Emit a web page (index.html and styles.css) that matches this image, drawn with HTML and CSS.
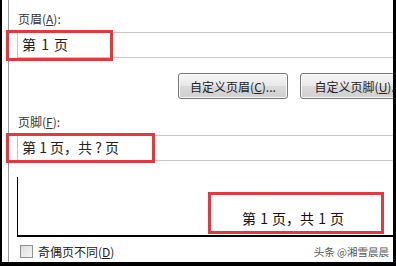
FILE: index.html
```html
<!DOCTYPE html>
<html lang="zh-CN">
<head>
  <meta charset="UTF-8">
  <title>页面设置 - 页眉/页脚</title>
  <link rel="stylesheet" href="styles.css">
</head>
<body>
  <div class="frame">
    <div class="dialog">
      <div class="label">页眉(<u>A</u>):</div>
      <div class="textbox">第 1 页</div>

      <div class="buttons">
        <button class="btn">自定义页眉(<u>C</u>)...</button>
        <button class="btn">自定义页脚(<u>U</u>)...</button>
      </div>

      <div class="label label-footer">页脚(<u>F</u>):</div>
      <div class="textbox textbox-footer">第 1 页，共 ? 页</div>

      <div class="preview">
        <span class="preview-text">第 1 页，共 1 页</span>
      </div>

      <div class="options">
        <label class="check"><span class="box"></span><span>奇偶页不同(<u>D</u>)</span></label>
        <span class="mark">头条 @湘雪晨晨</span>
      </div>
    </div>

    <!-- red marks drawn over the dialog -->
    <div class="mark-box mark-header"></div>
    <div class="mark-box mark-footer"></div>
    <div class="mark-box mark-preview"></div>
  </div>
</body>
</html>
```

FILE: styles.css
```css
body {
  margin: 0;
  font-family: "Noto Sans CJK SC", "Noto Sans", sans-serif;
  background: #000;
}
.frame {
  position: relative;
  width: 396px;
  height: 266px;
  box-sizing: border-box;
  border-left: 2px solid #000;
  border-right: 3px solid #000;
  border-bottom: 4px solid #000;
  background: #fff;
  overflow: hidden;
}
.dialog {
  margin-left: 6px;
  height: 100%;
  box-sizing: border-box;
  border-left: 1px solid #9a9a9a;
  padding: 11px 0 0 8px;
}
u { text-decoration: underline; text-underline-offset: 1px; }

.label {
  font-size: 12px;
  line-height: 16px;
  color: #333;
  padding-left: 1px;
}
.label-footer { margin-top: 15px; }

.textbox {
  margin-top: 5px;
  height: 26px;
  box-sizing: border-box;
  border: 1px solid #c6c6c6;
  border-right: none;
  padding-left: 4px;
  font-size: 14px;
  line-height: 23px;
  word-spacing: 2px;
  color: #222;
  white-space: pre;
}
.textbox-footer { word-spacing: 0; }

.buttons {
  display: flex;
  gap: 12px;
  margin: 15px 0 0 161px;
  white-space: nowrap;
}
.btn {
  flex: none;
  width: 110px;
  height: 26px;
  padding: 0;
  font-family: inherit;
  font-size: 12px;
  color: #222;
  border: 1px solid #777;
  border-radius: 3px;
  background: linear-gradient(to bottom, #f6f6f6, #e8e8e8 50%, #dadada 51%, #cfcfcf);
  box-shadow: inset 0 0 0 1px #fbfbfb;
}
.btn + .btn { width: 116px; }

.preview {
  display: flex;
  align-items: flex-end;
  margin-top: 16px;
  height: 60px;
  box-sizing: border-box;
  border-left: 1px solid #000;
  border-bottom: 2px solid #000;
  padding: 0 0 9px 224px;
}
.preview-text {
  font-size: 14px;
  line-height: 16px;
  word-spacing: 1px;
  color: #111;
  white-space: nowrap;
}

.options {
  display: flex;
  align-items: center;
  justify-content: space-between;
  margin-top: 6px;
  padding-right: 4px;
}
.check {
  display: flex;
  align-items: center;
  gap: 5px;
  font-size: 12px;
  color: #222;
  padding-left: 3px;
}
.box {
  width: 11px;
  height: 11px;
  border: 1px solid #8e8f8f;
  background: linear-gradient(135deg, #dcdcdc, #f6f6f6);
}
.mark {
  font-size: 10.5px;
  color: #555;
}

.mark-box {
  position: absolute;
  box-sizing: border-box;
  border: 3px solid #e3393e;
}
.mark-header { left: 4px; top: 30px; width: 107px; height: 31px; }
.mark-footer { left: 4px; top: 133px; width: 149px; height: 30px; }
.mark-preview { left: 206px; top: 192px; width: 176px; height: 42px; }
```
